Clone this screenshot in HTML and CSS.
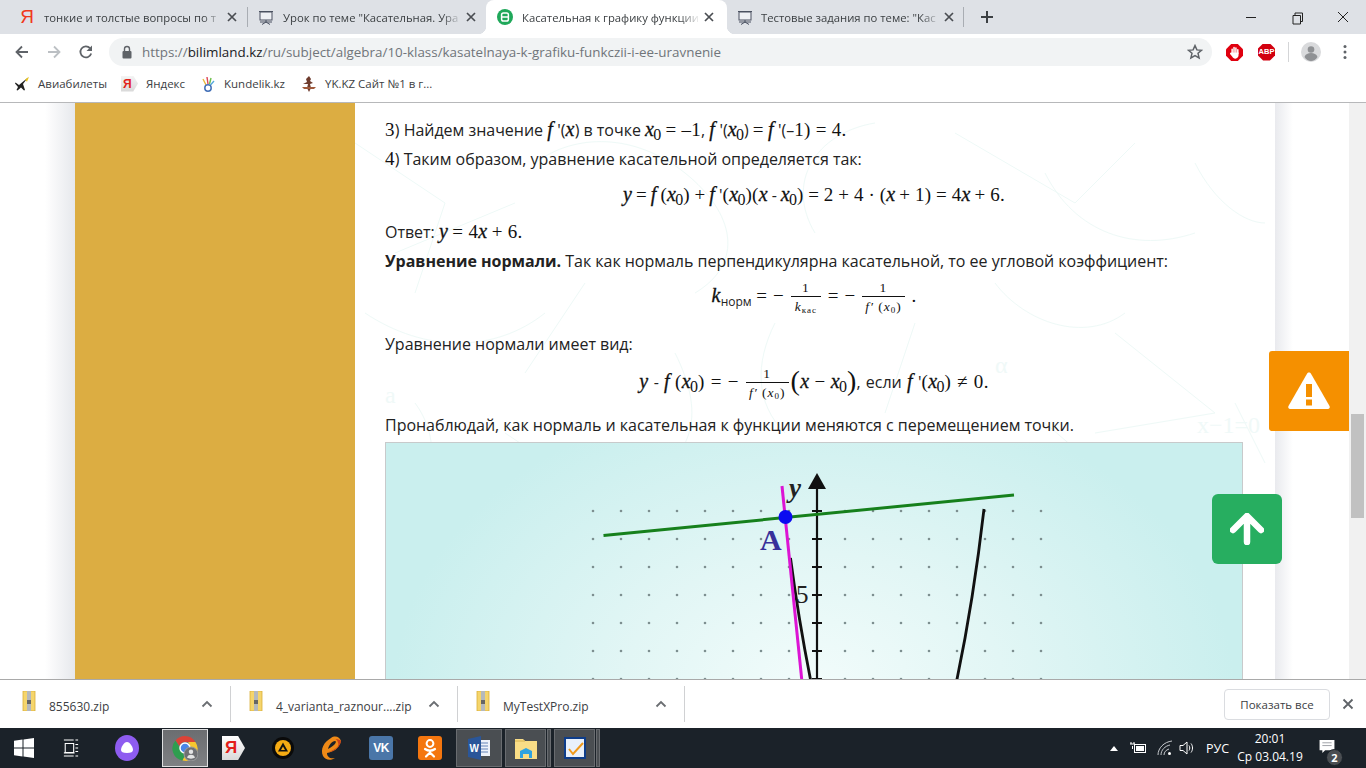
FILE: index.html
```html
<!DOCTYPE html>
<html lang="ru">
<head>
<meta charset="utf-8">
<title>Касательная к графику функции</title>
<link rel="stylesheet" href="styles.css">
</head>
<body>
<div class="app">
  <header class="tabstrip">
    <div class="tab tab-first">
      <span class="fav-ya">Я</span>
      <span class="tab-title">тонкие и толстые вопросы по т</span>
      <svg class="tab-x" viewBox="0 0 16 16"><path d="M4 4l8 8M12 4l-8 8"/></svg>
    </div>
    <div class="tab tab-sep">
      <svg class="fav" viewBox="0 0 16 16"><rect x="2" y="3" width="12" height="8" fill="#eef0f4" stroke="#4a5160"/><path d="M1 2.500h14M8 11v2M8 13l-4 2.500M8 13l4 2.500M2 13h12" stroke="#4a5160" fill="none"/></svg>
      <span class="tab-title">Урок по теме "Касательная. Ура</span>
      <svg class="tab-x" viewBox="0 0 16 16"><path d="M4 4l8 8M12 4l-8 8"/></svg>
    </div>
    <div class="tab tab-active">
      <svg class="fav" viewBox="0 0 16 16"><circle cx="8" cy="8" r="8" fill="#1fa85a"/><rect x="4.600" y="4" width="6.800" height="8" rx="1.800" fill="none" stroke="#fff" stroke-width="1.500"/><path d="M4.600 8h6.800" stroke="#fff" stroke-width="1.500"/></svg>
      <span class="tab-title">Касательная к графику функции</span>
      <svg class="tab-x" viewBox="0 0 16 16"><path d="M4 4l8 8M12 4l-8 8"/></svg>
    </div>
    <div class="tab tab-sep tab-last">
      <svg class="fav" viewBox="0 0 16 16"><rect x="2" y="3" width="12" height="8" fill="#eef0f4" stroke="#4a5160"/><path d="M1 2.500h14M8 11v2M8 13l-4 2.500M8 13l4 2.500M2 13h12" stroke="#4a5160" fill="none"/></svg>
      <span class="tab-title">Тестовые задания по теме: "Кас</span>
      <svg class="tab-x" viewBox="0 0 16 16"><path d="M4 4l8 8M12 4l-8 8"/></svg>
    </div>
    <svg class="newtab" viewBox="0 0 14 14"><path d="M7 1v12M1 7h12"/></svg>
    <div class="winctl">
      <svg viewBox="0 0 46 34"><path d="M18 17.500h10"/></svg>
      <svg viewBox="0 0 46 34"><path d="M19 15.500h7.500v8.500h-7.500zM21 15.500v-2.500h7.500v8.500h-2"/></svg>
      <svg viewBox="0 0 46 34"><path d="M18 12l10 10M28 12l-10 10"/></svg>
    </div>
  </header>

  <div class="toolbar">
    <svg class="nav" viewBox="0 0 16 16"><path class="dk" d="M14 8H3M8 2.500L2.500 8 8 13.500"/></svg>
    <svg class="nav" viewBox="0 0 16 16"><path class="lt" d="M2 8h11M8 2.500L13.500 8 8 13.500"/></svg>
    <svg class="nav" viewBox="0 0 16 16"><path class="dk" d="M13.200 9.500A5.500 5.500 0 1 1 12 4.200"/><path class="fl" d="M14 1.500v5.500H8.500z"/></svg>
    <div class="omnibox">
      <svg class="lock" viewBox="0 0 12 14"><rect x="1.500" y="6" width="9" height="7.500" rx="1" fill="#5f6368"/><path d="M3.500 6V4a2.500 2.500 0 0 1 5 0v2" fill="none" stroke="#5f6368" stroke-width="1.400"/></svg>
      <span class="url"><span class="url-dim">https://</span>bilimland.kz<span class="url-dim">/ru/subject/algebra/10-klass/kasatelnaya-k-grafiku-funkczii-i-ee-uravnenie</span></span>
      <svg class="star" viewBox="0 0 16 16"><path d="M8 1.600l1.900 4.300 4.600.4-3.500 3 1.100 4.600L8 11.500l-4.100 2.400L5 9.300l-3.500-3 4.600-.4z"/></svg>
    </div>
    <svg class="ext ext-stop" viewBox="0 0 18 18"><path d="M5.500 0h7L18 5.500v7L12.500 18h-7L0 12.500v-7z" fill="#e0000f"/><path d="M6.500 10V5.500M8.500 9V3.800M10.500 9V4.200M12.500 10V6" stroke="#fff" stroke-width="1.600" stroke-linecap="round"/><path d="M5.700 9h7.600v3c0 2-1.400 3.500-3.400 3.500-1.600 0-2.500-.8-3.200-2L4.300 10.500c-.4-.9.700-1.600 1.400-1.500z" fill="#fff"/></svg>
    <div class="abp"><span>ABP</span></div>
    <span class="tool-sep"></span>
    <svg class="avatar" viewBox="0 0 20 20"><circle cx="10" cy="10" r="10" fill="#d9dadc"/><circle cx="10" cy="7.500" r="3.300" fill="#8f9194"/><path d="M3.500 15c1-3 3.500-4 6.500-4s5.500 1 6.500 4c-1.500 2.500-4 4-6.500 4s-5-1.500-6.500-4z" fill="#8f9194"/></svg>
    <svg class="menu" viewBox="0 0 4 16"><circle cx="2" cy="2.500" r="1.500"/><circle cx="2" cy="8" r="1.500"/><circle cx="2" cy="13.500" r="1.500"/></svg>
  </div>

  <nav class="bookmarks">
    <div class="bm bm-1">
      <svg class="bm-ic" viewBox="0 0 16 16"><path d="M14 1.500L5 9 1.500 6.500 1 7.500 4 11 2.500 14l1 .5L7 11.500l3 3 1-.5L9 8z" fill="#222"/><path d="M15 .8l-4 3 2 2z" fill="#e8c31c"/></svg>
      <span>Авиабилеты</span>
    </div>
    <div class="bm bm-2">
      <span class="bm-ya">Я</span>
      <span>Яндекс</span>
    </div>
    <div class="bm bm-3">
      <svg class="bm-ic" viewBox="0 0 16 16"><path d="M3 3l3 6" stroke="#e8b93a" stroke-width="1.400"/><path d="M7 1l1 7" stroke="#d45" stroke-width="1.400"/><path d="M11 2L9.500 8" stroke="#6cbf4a" stroke-width="1.400"/><path d="M14 5l-3.500 4" stroke="#54a8dd" stroke-width="1.400"/><circle cx="8" cy="12" r="3.200" fill="none" stroke="#4471b8" stroke-width="1.500"/></svg>
      <span>Kundelik.kz</span>
    </div>
    <div class="bm bm-4">
      <svg class="bm-ic" viewBox="0 0 16 16"><path d="M8 0l2 3-1 2 3 2-3 1 1 4-2 4-2-4 1-4-5 0 4-2-1-3z" fill="#6d3a2c"/><path d="M1 11h14l-2 2H3z" fill="#a05a3c"/></svg>
      <span>YK.KZ Сайт №1 в г...</span>
    </div>
  </nav>

  <div class="viewport">
    <div class="gutter-l"></div>
    <aside class="sidebar"></aside>
    <main class="content">
      <svg class="doodles" viewBox="0 0 920 580" aria-hidden="true">
        <path d="M0 40l90 60-30 90M40 150l120-50M180 60c40-30 100-30 150 10s60 90 10 120M520 20c-60 10-90 60-60 110M600 30l120 70 60-60M690 70c30 60 90 80 150 60M10 210c60 40 130 40 180 0M230 180l-60 90M320 250c30 60 20 100-30 130M420 220c-20 40-20 80 10 110M560 220l-30 90M640 180c30 40 90 60 130 30M760 230l100 80-120 20M60 300c30 40 20 100-30 130M150 330l60 40M690 320l70 60M840 60c20 40 50 60 70 60M40 460l80-40M880 300l30 60"/>
        <text x="842" y="330" class="doodle-tx">x−1=0</text>
        <text x="30" y="300" class="doodle-tx">a</text>
        <text x="640" y="270" class="doodle-tx">α</text>
      </svg>
      <div class="article">
        <p class="p p-first"><span class="n">3</span>) Найдем значение <span class="m">f</span> '(<span class="m">x</span>) в точке <span class="m">x</span><sub class="s">0</sub> <span class="n">= –1</span>, <span class="m">f</span> '(<span class="m">x</span><sub class="s">0</sub>) <span class="n">=</span> <span class="m">f</span> '(–<span class="n">1) = 4.</span></p>
        <p class="p"><span class="n">4</span>) Таким образом, уравнение касательной определяется так:</p>
        <div class="eq eq-1"><span class="m">y</span> <span class="n">=</span> <span class="m">f</span> <span class="n">(</span><span class="m">x</span><sub class="s">0</sub><span class="n">) +</span> <span class="m">f</span> '<span class="n">(</span><span class="m">x</span><sub class="s">0</sub><span class="n">)(</span><span class="m">x</span> - <span class="m">x</span><sub class="s">0</sub><span class="n">) = 2 + 4 · (</span><span class="m">x</span> <span class="n">+ 1) = 4</span><span class="m">x</span> <span class="n">+ 6.</span></div>
        <p class="p p-ans">Ответ: <span class="m">y</span> <span class="n">= 4</span><span class="m">x</span> <span class="n">+ 6.</span></p>
        <p class="p"><b>Уравнение нормали.</b> Так как нормаль перпендикулярна касательной, то ее угловой коэффициент:</p>
        <div class="eq eq-2"><span class="m">k</span><sub class="s-t">норм</sub> <span class="n">= −</span> <span class="frac frac-k"><span class="num">1</span><span class="den"><i>k</i><sub class="s-k">кас</sub></span></span> <span class="n">= −</span> <span class="frac"><span class="num">1</span><span class="den"><i>f′</i> (<i>x</i><sub class="s-k">0</sub>)</span></span> <span class="n">.</span></div>
        <p class="p p-gap">Уравнение нормали имеет вид:</p>
        <div class="eq eq-3"><span class="m">y</span> - <span class="m">f</span> <span class="n">(</span><span class="m">x</span><sub class="s">0</sub><span class="n">) = −</span> <span class="frac"><span class="num">1</span><span class="den"><i>f′</i> (<i>x</i><sub class="s-k">0</sub>)</span></span><span class="n big">(</span><span class="m">x</span> <span class="n">−</span> <span class="m">x</span><sub class="s">0</sub><span class="n big">)</span>, если <span class="m">f</span> '<span class="n">(</span><span class="m">x</span><sub class="s">0</sub><span class="n">) ≠ 0.</span></div>
        <p class="p p-last">Пронаблюдай, как нормаль и касательная к функции меняются с перемещением точки.</p>
        <figure class="chart">
          <svg class="chart-svg" viewBox="386 443 856 300">
            <defs>
              <pattern id="dots" x="593" y="511" width="28" height="28" patternUnits="userSpaceOnUse">
                <circle cx="0" cy="0" r="1.300" fill="#7d8f90"/>
                <circle cx="28" cy="0" r="1.300" fill="#7d8f90"/>
                <circle cx="0" cy="28" r="1.300" fill="#7d8f90"/>
                <circle cx="28" cy="28" r="1.300" fill="#7d8f90"/>
              </pattern>
            </defs>
            <rect x="591" y="509" width="452" height="234" fill="url(#dots)"/>
            <path d="M817 489V743" stroke="#111" stroke-width="2.200"/>
            <path d="M817 473l9 16h-18z" fill="#111"/>
            <path d="M812 511h10M812 539h10M812 567h10M812 595h10M812 623h10M812 651h10M812 679h10" stroke="#111" stroke-width="2"/>
            <path d="M790.500 558C796 600 803 642 811 682" fill="none" stroke="#111" stroke-width="2.800"/>
            <path d="M984 509C977 570 967 632 956 684" fill="none" stroke="#111" stroke-width="2.800"/>
            <path d="M782 486L802 682" stroke="#dc14d4" stroke-width="3"/>
            <path d="M603.500 535.500L1014 495" stroke="#16801c" stroke-width="3"/>
            <circle cx="785.500" cy="517" r="7" fill="#0b0bf0"/>
            <text x="760" y="550" class="chart-a">A</text>
            <text x="789" y="497" class="chart-y">y</text>
            <text x="796" y="603" class="chart-5">5</text>
          </svg>
        </figure>
      </div>
    </main>
    <div class="gutter-r"></div>
    <div class="scrollbar"><span class="thumb"></span></div>

    <button class="float-warn" aria-label="Предупреждение">
      <svg viewBox="0 0 44 40"><path d="M22 1.500c.9 0 1.500.5 2 1.300L42.500 35c.8 1.500 0 3-1.700 3H3.200c-1.700 0-2.500-1.500-1.700-3L20 2.800c.5-.8 1.100-1.300 2-1.300z" fill="#fff"/><rect x="19" y="13" width="6" height="13" fill="#f59000"/><rect x="19" y="28.500" width="6" height="6" fill="#f59000"/></svg>
    </button>
    <button class="float-up" aria-label="Наверх">
      <svg viewBox="0 0 34 32"><path d="M17 3L3 17M17 3l14 14M17 5v24" fill="none" stroke="#fff" stroke-width="6.500" stroke-linecap="round" stroke-linejoin="round"/></svg>
    </button>
  </div>

  <div class="downloads">
    <div class="dl">
      <svg class="zip" viewBox="0 0 14 20"><path d="M1 0h12v20H1z" fill="#f5d56c" stroke="#d9ae38" stroke-width=".8"/><rect x="5" y="0" width="4" height="20" fill="#b5b9bd"/><rect x="5" y="9" width="4" height="4" fill="#666"/></svg>
      <span class="dl-name">855630.zip</span>
      <svg class="chev" viewBox="0 0 12 8"><path d="M1.500 6.500L6 2l4.500 4.500"/></svg>
    </div>
    <div class="dl">
      <svg class="zip" viewBox="0 0 14 20"><path d="M1 0h12v20H1z" fill="#f5d56c" stroke="#d9ae38" stroke-width=".8"/><rect x="5" y="0" width="4" height="20" fill="#b5b9bd"/><rect x="5" y="9" width="4" height="4" fill="#666"/></svg>
      <span class="dl-name">4_varianta_raznour....zip</span>
      <svg class="chev" viewBox="0 0 12 8"><path d="M1.500 6.500L6 2l4.500 4.500"/></svg>
    </div>
    <div class="dl">
      <svg class="zip" viewBox="0 0 14 20"><path d="M1 0h12v20H1z" fill="#f5d56c" stroke="#d9ae38" stroke-width=".8"/><rect x="5" y="0" width="4" height="20" fill="#b5b9bd"/><rect x="5" y="9" width="4" height="4" fill="#666"/></svg>
      <span class="dl-name">MyTestXPro.zip</span>
      <svg class="chev" viewBox="0 0 12 8"><path d="M1.500 6.500L6 2l4.500 4.500"/></svg>
    </div>
    <button class="show-all">Показать все</button>
    <svg class="dl-x" viewBox="0 0 12 12"><path d="M1.500 1.500l9 9M10.500 1.500l-9 9"/></svg>
  </div>

  <footer class="taskbar">
    <svg class="tb-win" viewBox="0 0 20 20"><path d="M0 2.800l8.500-1.200v8H0zM9.500 1.400L20 0v9.600H9.500zM0 10.600h8.500v7.900L0 17.300zM9.500 10.600H20V20L9.500 18.600z" fill="#fff"/></svg>
    <svg class="tb-view" viewBox="0 0 18 20"><path d="M1 1h11M14 1h3M1 19h11M14 19h3M2.500 5h9.500v10H2.500zM14 6h3M14 10h3M14 14h3M1 15.500h12" fill="none" stroke="#fff" stroke-width="1.200"/></svg>
    <svg class="tb-alice" viewBox="0 0 24 26"><ellipse cx="12" cy="13" rx="12" ry="13" fill="#8e5cf0"/><path d="M12 7c3 0 6 5 6 8 0 2-2 3-6 3s-6-1-6-3c0-3 3-8 6-8z" fill="#fff"/></svg>
    <div class="tb-chrome">
      <svg viewBox="0 0 26 26"><path d="M13 1a12 12 0 0 1 10.400 6H13a6 6 0 0 0-5.600 3.800L3.500 5.500A12 12 0 0 1 13 1z" fill="#dc4337"/><path d="M3.500 5.500l5 8.500a6 6 0 0 0 5 5l-3 6.400A12 12 0 0 1 3.500 5.500z" fill="#2f9e4f"/><path d="M23.400 7A12 12 0 0 1 10.500 25.400L16 15a6 6 0 0 0 0-8z" fill="#f7c62f"/><circle cx="13" cy="13" r="5" fill="#4a86e8" stroke="#fff" stroke-width="1.500"/><circle cx="19" cy="19" r="7" fill="#6f7073" stroke="#9a9b9d" stroke-width="1"/><circle cx="19" cy="16.800" r="2.200" fill="#e4e4e4"/><path d="M15 22.500c.8-2 2.200-2.700 4-2.700s3.200.7 4 2.700c-2 1.500-6 1.500-8 0z" fill="#e4e4e4"/></svg>
    </div>
    <div class="tb-ybro"><span>Я</span></div>
    <svg class="tb-aimp" viewBox="0 0 22 22"><circle cx="11" cy="11" r="11" fill="#0a0a0a"/><circle cx="11" cy="11" r="8" fill="#f5ab13"/><path d="M11 5.500l5 9H6z" fill="#111"/><path d="M11 9.500l2 3.500H9z" fill="#f5ab13"/></svg>
    <svg class="tb-e" viewBox="0 0 22 26"><path d="M21 6c-1-4-6-6-10-3C4 7 0 14 3 21c2 4 8 5 12 2-5 1-8-1-8-5 6-1 12-4 14-12zM8 14c1-4 4-8 7-8 2 0 1 4-7 8z" fill="#ef8a17"/><path d="M21 6c-1 6-6 10-13 11.500 7-3 12-6 10-10-.5-1.500-1-2.500-2.500-3.500 3 0 4.500 1 5.500 2z" fill="#c9401a"/></svg>
    <div class="tb-vk"><span>VK</span></div>
    <svg class="tb-ok" viewBox="0 0 24 24"><rect width="24" height="24" rx="3" fill="#f4760f"/><circle cx="12" cy="7.500" r="3.400" fill="none" stroke="#fff" stroke-width="2"/><path d="M7 13c3 2 7 2 10 0M12 15v2M12 16.500l-4 4M12 16.500l4 4" fill="none" stroke="#fff" stroke-width="2.200" stroke-linecap="round"/></svg>
    <div class="tb-box tb-word">
      <svg viewBox="0 0 24 24"><rect x="11" y="4" width="12" height="16" fill="#eef2fa"/><path d="M14 7h7M14 10h7M14 13h7M14 16h7" stroke="#6584b8"/><path d="M1 3l13-3v24L1 21z" fill="#2a5699"/><text x="2.500" y="15.500" class="word-w">W</text></svg>
    </div>
    <div class="tb-box tb-folder">
      <svg viewBox="0 0 24 22"><path d="M1 2h8l2 2h12v18H1z" fill="#f9dd86"/><path d="M1 4h10" stroke="#d7b24f"/><path d="M6 21v-7l6-3 6 3v7h-3v-4H9v4z" fill="#2fa3e0"/></svg>
    </div>
    <span class="tb-sliver"></span>
    <div class="tb-box tb-test">
      <svg viewBox="0 0 22 22"><rect x="1" y="1" width="20" height="20" fill="#e9f1fb" stroke="#0e3d8a" stroke-width="2"/><path d="M5 12l4 5L19 6" fill="none" stroke="#f09a1c" stroke-width="2"/></svg>
    </div>
    <span class="tb-sliver"></span>

    <div class="tray">
      <svg class="tr-up" viewBox="0 0 8 5"><path d="M4 0l4 5H0z" fill="#fff"/></svg>
      <svg class="tr-bat" viewBox="0 0 18 14"><path d="M1 3h5M2 1v2M5 1v2M3.500 5v3" stroke="#fff" fill="none"/><rect x="5.500" y="3.500" width="11" height="8" fill="none" stroke="#fff"/><rect x="7" y="5" width="8" height="5" fill="#fff"/></svg>
      <svg class="tr-wifi" viewBox="0 0 16 16"><path d="M1 15C1 8 7 2 15 1M4 15c0-5 4-9 9-10M7 15c0-3 2-5 5-6" fill="none" stroke="#c5c8cc"/><circle cx="12.500" cy="13.500" r="1.500" fill="#fff"/></svg>
      <svg class="tr-vol" viewBox="0 0 16 16"><path d="M1 5.500h3L8 2v12l-4-3.500H1z" fill="none" stroke="#fff"/><path d="M10 5.500c1 1.500 1 3.500 0 5M12 3.500c2 2.500 2 6.500 0 9" fill="none" stroke="#fff"/></svg>
      <span class="tr-lang">РУС</span>
      <div class="tr-clock"><span>20:01</span><span>Ср 03.04.19</span></div>
      <div class="tr-notif">
        <svg viewBox="0 0 16 14"><path d="M0 0h16v11H6l-3 3v-3H0z" fill="#fff"/><path d="M3 3h10M3 6h10" stroke="#9a9ea3"/></svg>
        <span class="tr-badge">2</span>
      </div>
    </div>
  </footer>
</div>
</body>
</html>
```
FILE: styles.css
```css
* { box-sizing: border-box; }
html, body { margin: 0; padding: 0; height: 100%; overflow: hidden; background: #fff; }
body { font-family: "Open Sans", "Noto Sans", sans-serif; color: #222; }
.app { width: 1366px; height: 768px; display: flex; flex-direction: column; overflow: hidden; }

/* Tab strip */
.tabstrip { height: 34px; flex: none; background: #dee1e6; display: flex; align-items: stretch; padding-left: 8px; }
.tab { width: 239px; display: flex; align-items: center; padding: 0 7px 0 11px; gap: 9px; position: relative; font-size: 11.300px; color: #3c4043; }
.tab-sep::before { content: ""; position: absolute; left: 0; top: 7px; height: 20px; width: 1px; background: #a9adb3; }
.tab-active { width: 241px; background: #fff; border-radius: 8px 8px 0 0; padding-right: 10px; color: #3c4043; }
.tab-active::before, .tab-active::after { content: ""; position: absolute; bottom: 0; width: 8px; height: 8px; }
.tab-active::before { left: -8px; background: radial-gradient(circle at 0 0, transparent 8px, #fff 8.500px); }
.tab-active::after { right: -8px; background: radial-gradient(circle at 100% 0, transparent 8px, #fff 8.500px); }
.tab-last { width: 237px; padding-left: 10px; gap: 8px; }
.tab-last::before { display: none; }
.tab-last::after { content: ""; position: absolute; right: 0; top: 7px; height: 20px; width: 1px; background: #a9adb3; }
.fav { width: 16px; height: 16px; flex: none; }
.fav-ya { width: 16px; flex: none; text-align: center; font: 400 19px/16px "Liberation Sans", sans-serif; color: #f0391c; }
.tab-title { flex: 1; min-width: 0; white-space: nowrap; overflow: hidden; -webkit-mask-image: linear-gradient(90deg, #000 calc(100% - 20px), transparent); mask-image: linear-gradient(90deg, #000 calc(100% - 20px), transparent); }
.tab-x { width: 16px; height: 16px; flex: none; fill: none; stroke: #4a4d52; stroke-width: 1.700; margin-left: -8px; }
.newtab { width: 14px; height: 14px; margin: 10px 0 0 16px; fill: none; stroke: #3c4043; stroke-width: 2; }
.winctl { margin-left: auto; display: flex; }
.winctl svg { width: 46px; height: 34px; fill: none; stroke: #222; stroke-width: 1; }

/* Toolbar */
.toolbar { height: 32px; flex: none; background: #fff; display: flex; align-items: center; position: relative; padding-top: 4px; }
.nav { width: 16px; height: 16px; flex: none; margin-left: 16px; }
.nav:first-child { margin-left: 14px; }
.nav .dk { fill: none; stroke: #5f6368; stroke-width: 1.800; }
.nav .lt { fill: none; stroke: #bcc0c4; stroke-width: 1.800; }
.nav .fl { fill: #5f6368; }
.omnibox { width: 1103px; height: 28px; margin-left: 15px; background: #f1f3f4; border-radius: 14px; display: flex; align-items: center; padding-left: 12px; flex: none; }
.lock { width: 12px; height: 14px; flex: none; }
.url { margin-left: 9px; font-size: 13.400px; color: #202124; white-space: nowrap; }
.url-dim { color: #70757a; }
.star { width: 16px; height: 16px; margin-left: auto; margin-right: 9px; fill: none; stroke: #5f6368; stroke-width: 1.500; }
.ext { flex: none; }
.ext-stop { width: 17px; height: 17px; margin-left: 14px; }
.abp { width: 17px; height: 17px; margin-left: 15px; flex: none; background: #d2000f; clip-path: polygon(30% 0, 70% 0, 100% 30%, 100% 70%, 70% 100%, 30% 100%, 0 70%, 0 30%); display: flex; align-items: center; justify-content: center; }
.abp span { font: 700 7.500px/1 "Liberation Sans", sans-serif; color: #fff; }
.tool-sep { width: 1px; height: 20px; background: #d4d5d7; margin-left: 13px; flex: none; }
.avatar { width: 20px; height: 20px; margin-left: 12px; flex: none; }
.menu { width: 4px; height: 16px; margin-left: 22px; fill: #5f6368; flex: none; }

/* Bookmarks */
.bookmarks { height: 37px; flex: none; background: #fff; border-bottom: 1px solid #b7b8ba; display: flex; align-items: center; font-size: 11.500px; color: #3c4043; padding-bottom: 1px; }
.bm { display: flex; align-items: center; gap: 8px; white-space: nowrap; }
.bm-ic { width: 16px; height: 16px; flex: none; }
.bm-1 { margin-left: 14px; width: 107px; }
.bm-2 { width: 79px; gap: 8px; }
.bm-3 { width: 101px; }
.bm-ya { width: 17px; height: 16px; background: linear-gradient(#f4f4f4, #d8d8d8); clip-path: polygon(0 0, 72% 0, 100% 50%, 72% 100%, 0 100%); color: #e2221c; font: 700 12px/16px "Liberation Sans", sans-serif; padding-left: 2px; flex: none; }

/* Viewport */
.viewport { flex: 1; min-height: 0; display: flex; position: relative; overflow: hidden; border-bottom: 1px solid #a9a9a9; }
.gutter-l { width: 75px; flex: none; background: linear-gradient(90deg, #fff 0, #fff 45px, #e6e8ec 75px); }
.sidebar { width: 280px; flex: none; background: #dcad42; }
.content { width: 920px; flex: none; position: relative; background: #fff; overflow: hidden; }
.gutter-r { flex: 1; background: linear-gradient(90deg, #e9eaee 0, #fff 18px); }
.scrollbar { width: 17px; flex: none; background: #f1f1f1; padding: 311px 2px 0; }
.thumb { display: block; height: 104px; background: #c1c1c1; }

.doodles { position: absolute; left: 0; top: 0; width: 920px; height: 580px; fill: none; stroke: #eef9f7; stroke-width: 1; }
.doodle-tx { font: 24px "Liberation Serif", serif; fill: #f0f9f8; stroke: none; }

.article { position: relative; padding: 13px 32px 0 30px; font-size: 16px; letter-spacing: -.02px; color: #222; }
.p { margin: 0 0 1px; line-height: 29px; white-space: nowrap; }
.p-first { margin-bottom: 0; }
.p-ans { margin: 3px 0 0; }
.p-gap { margin: 15px 0 0; }
.p-last { margin: 6px 0 2px; }
.p b { font-weight: 700; }

.m { font: italic 400 20px/1 "Liberation Serif", serif; letter-spacing: .4px; color: #111; -webkit-text-stroke: .3px #111; }
.n { font: 400 19px/1 "Liberation Serif", serif; letter-spacing: .3px; color: #111; }
.big { font-size: 28px; font-weight: 400; vertical-align: -2px; }
.s { font: 400 16px/1 "Liberation Serif", serif; vertical-align: -4px; margin-left: -1px; color: #111; }
.s-t { font: 400 12px/1 "Open Sans", sans-serif; vertical-align: -4px; }

.eq { display: block; text-align: center; white-space: nowrap; }
.eq-1 { height: 40px; line-height: 40px; word-spacing: -.4px; }
.eq-2 { height: 38px; line-height: 38px; word-spacing: .6px; }
.eq-3 { height: 46px; line-height: 46px; word-spacing: 1px; }

.frac { display: inline-flex; flex-direction: column; align-items: center; vertical-align: middle; font: 400 13.500px/1 "Liberation Serif", serif; letter-spacing: 1px; word-spacing: 0; color: #111; margin: 0 2px; }
.num { padding: 0 2px 1px; line-height: 14px; border-bottom: 1px solid #111; align-self: stretch; text-align: center; }
.den { padding: 3px 3px 0; line-height: 14px; white-space: nowrap; }
.frac-k .den { padding: 3px 4px 0; }
.s-k { font-size: 9px; vertical-align: -2px; line-height: 1; }

.chart { margin: 0; width: 858px; height: 300px; border: 1px solid #c8cacb; background: radial-gradient(ellipse 420px 300px at 50% 82%, #f2fcfb 0, #e2f6f5 45%, #caefee 100%); }
.chart-svg { display: block; width: 856px; height: 300px; }
.chart-a { font: 700 30px "Liberation Serif", serif; fill: #38309a; }
.chart-y { font: italic 700 27px "Liberation Serif", serif; fill: #222; }
.chart-5 { font: 400 25px "Liberation Serif", serif; fill: #222; }

.float-warn, .float-up { position: absolute; border: 0; padding: 0; display: flex; align-items: center; justify-content: center; }
.float-warn { left: 1269px; top: 248px; width: 80px; height: 80px; background: #f59000; border-radius: 3px 0 0 3px; }
.float-warn svg { width: 44px; height: 40px; }
.float-up { left: 1212px; top: 391px; width: 70px; height: 70px; background: #27ae60; border-radius: 6px; }
.float-up svg { width: 34px; height: 32px; }

/* Downloads */
.downloads { height: 48px; flex: none; background: #fff; display: flex; align-items: center; font-size: 12px; color: #3c4043; }
.dl { width: 227px; height: 36px; display: flex; align-items: center; padding-left: 22px; border-right: 1px solid #d0d1d3; flex: none; }
.dl:first-child { width: 231px; }
.zip { width: 14px; height: 20px; flex: none; margin-top: -6px; }
.dl-name { margin-left: 13px; width: 152px; flex: none; white-space: nowrap; padding-top: 4px; }
.chev { width: 12px; height: 8px; fill: none; stroke: #6b6e72; stroke-width: 1.800; flex: none; }
.dl + .dl .zip { margin-left: -4px; }
.show-all { margin-left: 539px; width: 106px; height: 31px; background: #fff; border: 1px solid #dadce0; border-radius: 4px; font: 11.500px "Open Sans", sans-serif; color: #3c4043; padding: 0; flex: none; }
.dl-x { width: 12px; height: 12px; margin-left: 12px; fill: none; stroke: #5f6368; stroke-width: 1.800; flex: none; }

/* Taskbar */
.taskbar { height: 40px; flex: none; background: #1b2229; display: flex; align-items: center; color: #fff; font-size: 12px; }
.tb-win { width: 20px; height: 20px; margin-left: 14px; flex: none; }
.tb-view { width: 16px; height: 18px; margin-left: 29px; flex: none; }
.tb-alice { width: 24px; height: 26px; margin-left: 36px; flex: none; }
.tb-chrome { width: 46px; height: 38px; margin-left: 23px; background: linear-gradient(#6b6d70, #7e8083); border: 1px solid #dfe0e1; display: flex; align-items: center; justify-content: center; flex: none; }
.tb-chrome svg { width: 26px; height: 26px; }
.tb-ybro { width: 23px; height: 24px; margin-left: 14px; flex: none; background: linear-gradient(#fff, #d9d9d9); clip-path: polygon(0 0, 70% 0, 100% 50%, 70% 100%, 0 100%); font: 700 17px/24px "Liberation Sans", sans-serif; color: #e3201b; padding-left: 3px; }
.tb-aimp { width: 22px; height: 22px; margin-left: 27px; flex: none; }
.tb-e { width: 22px; height: 26px; margin-left: 26px; flex: none; }
.tb-vk { width: 24px; height: 24px; margin-left: 27px; flex: none; background: #4a76a8; border-radius: 3px; display: flex; align-items: center; justify-content: center; }
.tb-vk span { font: 700 12px/1 "Liberation Sans", sans-serif; color: #fff; letter-spacing: -.5px; }
.tb-ok { width: 24px; height: 24px; margin-left: 25px; flex: none; }
.tb-box { height: 38px; background: #4a4e52; border: 1px solid #696c70; display: flex; align-items: center; justify-content: center; flex: none; }
.tb-word { width: 46px; margin-left: 14px; }
.tb-word svg { width: 24px; height: 24px; }
.word-w { font: 700 10px "Liberation Sans", sans-serif; fill: #fff; }
.tb-folder { width: 41px; margin-left: 3px; }
.tb-folder svg { width: 24px; height: 22px; }
.tb-test { width: 41px; margin-left: 3px; }
.tb-test svg { width: 22px; height: 22px; }
.tb-sliver { width: 4px; height: 38px; background: #4a4e52; border: 1px solid #696c70; margin-left: 1px; flex: none; }
.tray { margin-left: auto; display: flex; align-items: center; height: 40px; }
.tr-up { width: 8px; height: 5px; flex: none; }
.tr-bat { width: 18px; height: 14px; margin-left: 11px; flex: none; }
.tr-wifi { width: 16px; height: 16px; margin-left: 10px; flex: none; }
.tr-vol { width: 16px; height: 16px; margin-left: 6px; flex: none; }
.tr-lang { margin-left: 11px; font-size: 12.500px; width: 28px; }
.tr-clock { margin-left: 3px; width: 66px; display: flex; flex-direction: column; align-items: center; font-size: 12px; line-height: 18px; }
.tr-notif { position: relative; width: 24px; height: 24px; margin: 0 23px 0 16px; flex: none; }
.tr-notif svg { width: 16px; height: 13px; position: absolute; left: 0; top: 4px; }
.tr-badge { position: absolute; left: 7px; top: 13px; width: 17px; height: 17px; border-radius: 50%; background: #4a4e52; border: 1px solid #1b2229; font: 700 11px/15px "Open Sans", sans-serif; text-align: center; color: #fff; }
```
